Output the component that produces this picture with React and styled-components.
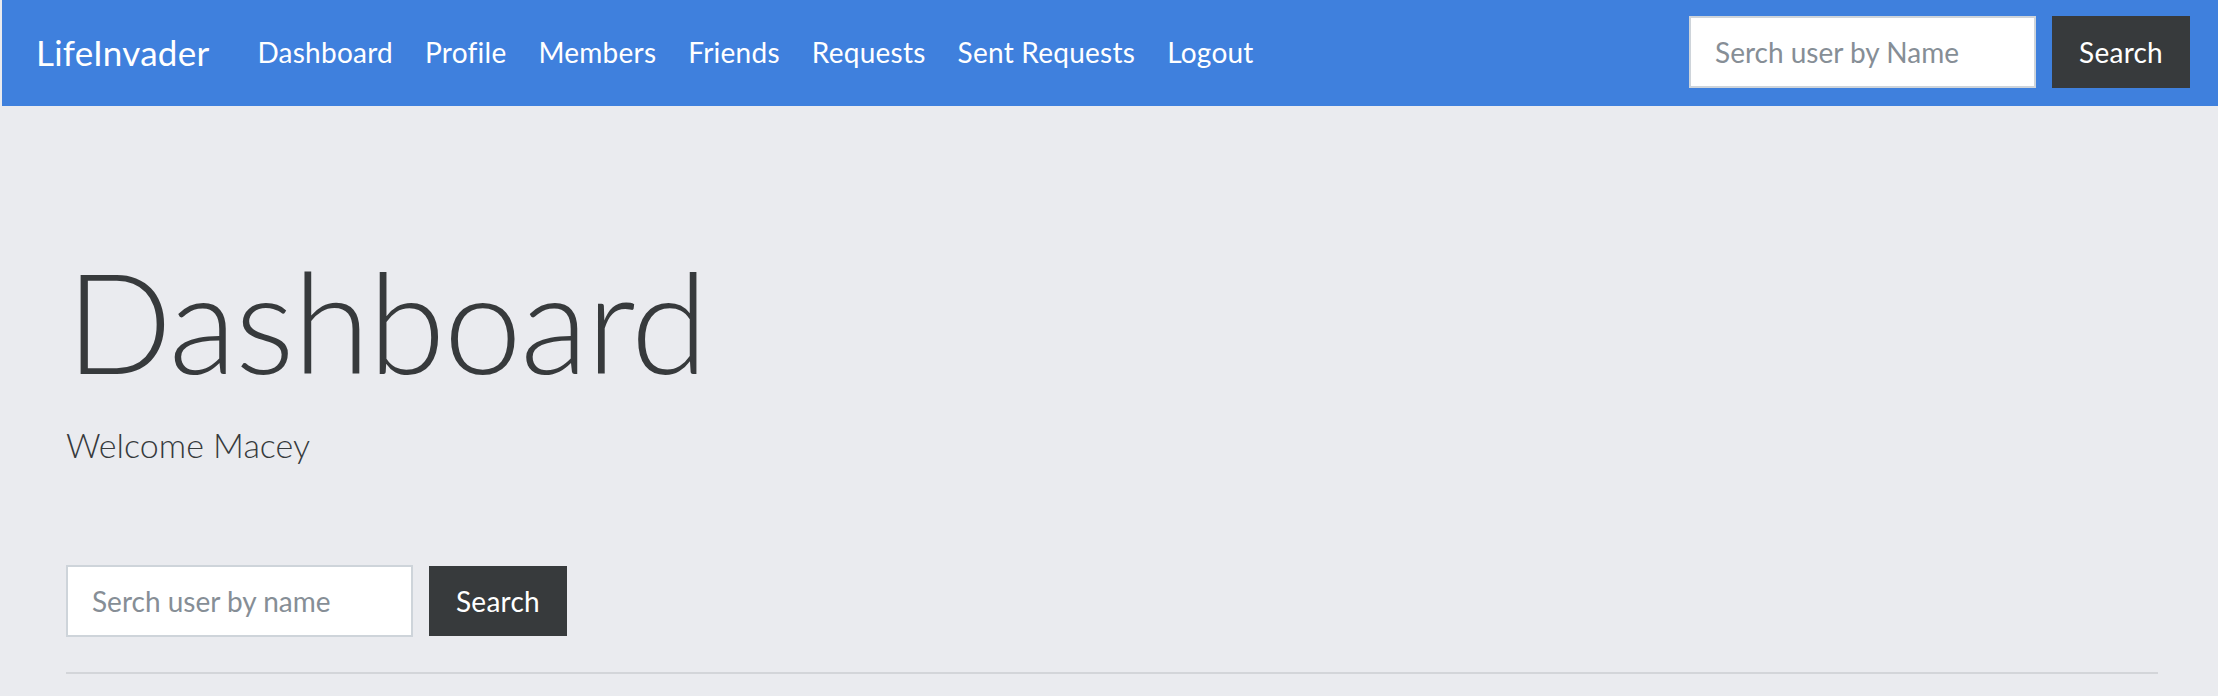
import React from "react";
import styled, { createGlobalStyle } from "styled-components";

const GlobalStyle = createGlobalStyle`
  html, body {
    margin: 0;
    padding: 0;
    background: #eaebef;
    font-family: "Lato", "Noto Sans", sans-serif;
  }
  * { box-sizing: border-box; }
`;

const Page = styled.div`
  min-height: 696px;
  padding-left: 2px;
  background: #eaebef;
`;

const Navbar = styled.nav`
  display: flex;
  align-items: center;
  height: 106px;
  padding: 0 28px 2px 34px;
  background: #3f80dd;
`;

const Brand = styled.a`
  color: #ffffff;
  font-size: 35px;
  font-weight: 400;
  text-decoration: none;
  margin-right: 32px;
  letter-spacing: 0.25px;
`;

const NavList = styled.ul`
  display: flex;
  list-style: none;
  margin: 0;
  padding: 0;
  flex: 1;
`;

const NavLink = styled.a`
  display: block;
  padding: 0 16px;
  color: #ffffff;
  font-size: 28px;
  text-decoration: none;
  letter-spacing: 0.25px;
`;

const SearchForm = styled.form`
  display: flex;
  align-items: center;
  gap: 16px;
`;

const SearchInput = styled.input`
  width: 347px;
  height: 72px;
  padding: 0 24px;
  border: 2px solid #ced4da;
  background: #ffffff;
  font-family: "Lato", "Noto Sans", sans-serif;
  font-size: 28px;
  color: #373a3c;
  outline: none;
  &::placeholder {
    color: #868e96;
  }
`;

const SearchButton = styled.button`
  height: ${(p) => p.$h || 72}px;
  padding: 0 27px;
  border: none;
  background: #373a3c;
  color: #ffffff;
  font-family: "Lato", "Noto Sans", sans-serif;
  font-size: 28px;
  letter-spacing: 0.25px;
  cursor: pointer;
`;

const Jumbotron = styled.section`
  padding: 130px 60px 0 64px;
`;

const Title = styled.h1`
  margin: 0;
  font-size: 140px;
  font-weight: 300;
  line-height: 1.2;
  color: #373a3c;
  letter-spacing: -1.6px;
`;

const Lead = styled.p`
  margin: 20px 0 0;
  font-size: 34px;
  font-weight: 300;
  color: #373a3c;
`;

const BodyForm = styled(SearchForm)`
  margin-top: 100px;
`;

const Rule = styled.hr`
  margin: 35px 0 0;
  border: none;
  border-top: 2px solid #d3d5d9;
`;

const links = ["Dashboard", "Profile", "Members", "Friends", "Requests", "Sent Requests", "Logout"];

export default function App() {
  return (
    <Page>
      <GlobalStyle />
      <Navbar>
        <Brand href="#">LifeInvader</Brand>
        <NavList>
          {links.map((l) => (
            <li key={l}>
              <NavLink href="#">{l}</NavLink>
            </li>
          ))}
        </NavList>
        <SearchForm onSubmit={(e) => e.preventDefault()}>
          <SearchInput placeholder="Serch user by Name" />
          <SearchButton type="submit">Search</SearchButton>
        </SearchForm>
      </Navbar>
      <Jumbotron>
        <Title>Dashboard</Title>
        <Lead>Welcome Macey</Lead>
        <BodyForm onSubmit={(e) => e.preventDefault()}>
          <SearchInput placeholder="Serch user by name" />
          <SearchButton type="submit" $h={70}>Search</SearchButton>
        </BodyForm>
        <Rule />
      </Jumbotron>
    </Page>
  );
}
